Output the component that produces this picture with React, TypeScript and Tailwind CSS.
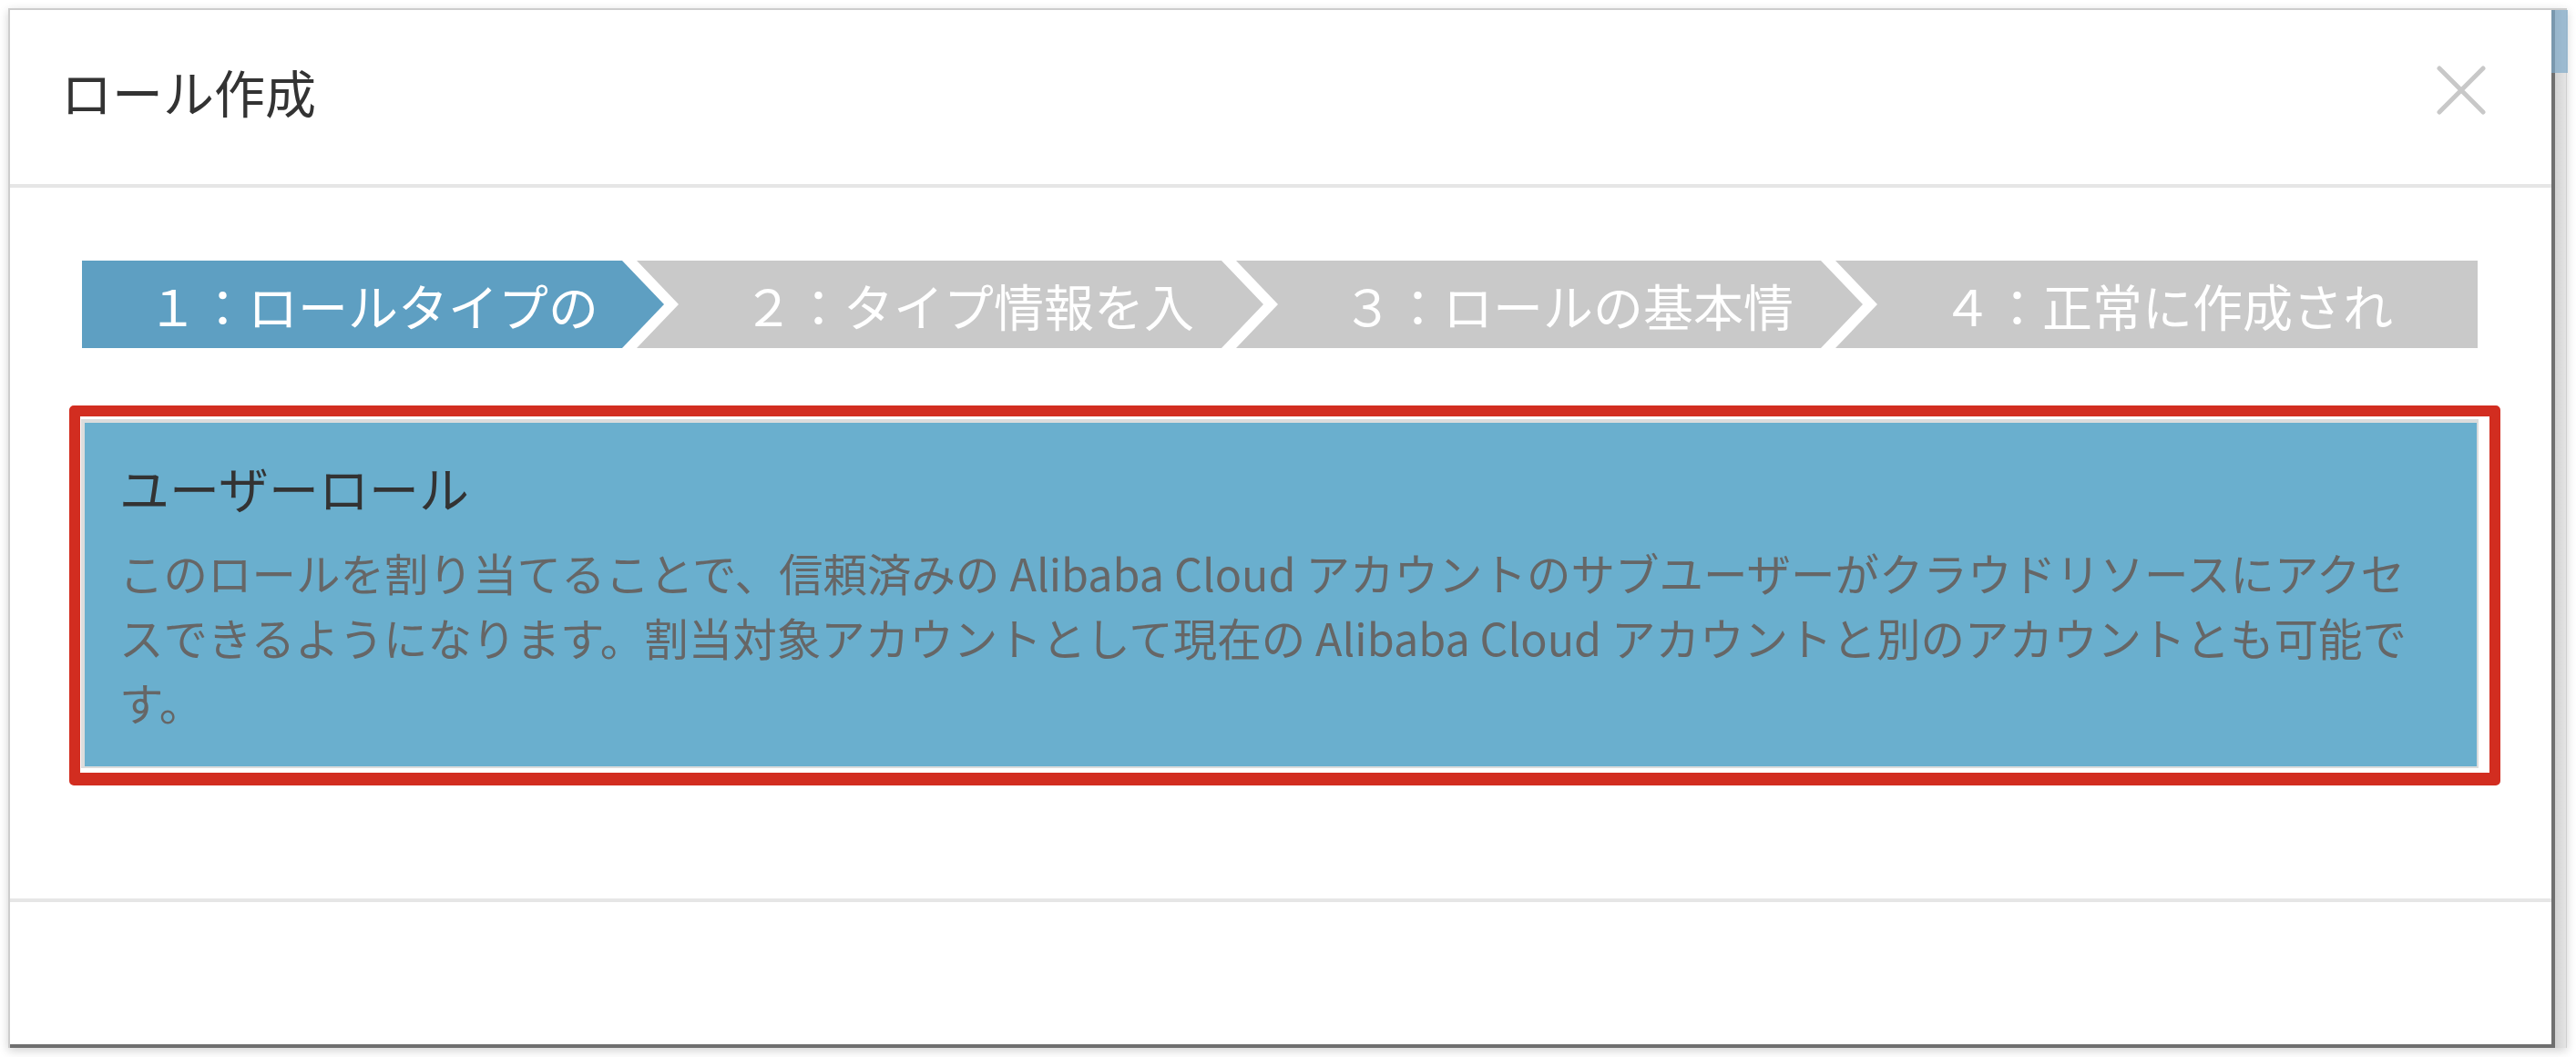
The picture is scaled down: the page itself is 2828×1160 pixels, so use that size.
const jp = "font-['Noto_Sans_CJK_JP','Noto_Sans',sans-serif]";

const Steps = () => {
  return (
    <div className="flex h-[96px] ml-[79px] mr-[81px] mt-[80px]">
      {/* step 1 - active */}
      <div className="w-[639px] shrink-0 h-full bg-[#5e9fc2] flex items-center pl-[72px] overflow-hidden [clip-path:polygon(0_0,calc(100%_-_46px)_0,100%_50%,calc(100%_-_46px)_100%,0_100%)]">
        <span className="text-white text-[55px] leading-none whitespace-nowrap">１：ロールタイプの</span>
      </div>
      <div className="w-[688px] shrink-0 -ml-[30px] h-full bg-[#c9c9c9] flex items-center pl-[117px] overflow-hidden [clip-path:polygon(0_0,calc(100%_-_46px)_0,100%_50%,calc(100%_-_46px)_100%,0_100%,46px_50%)]">
        <span className="text-white text-[55px] leading-none whitespace-nowrap">２：タイプ情報を入</span>
      </div>
      <div className="w-[688px] shrink-0 -ml-[30px] h-full bg-[#c9c9c9] flex items-center pl-[117px] overflow-hidden [clip-path:polygon(0_0,calc(100%_-_46px)_0,100%_50%,calc(100%_-_46px)_100%,0_100%,46px_50%)]">
        <span className="text-white text-[55px] leading-none whitespace-nowrap">３：ロールの基本情</span>
      </div>
      <div className="w-[705px] shrink-0 -ml-[30px] h-full bg-[#c9c9c9] flex items-center pl-[117px] overflow-hidden [clip-path:polygon(0_0,100%_0,100%_100%,0_100%,46px_50%)]">
        <span className="text-white text-[55px] leading-none whitespace-nowrap">４：正常に作成され</span>
      </div>
    </div>
  );
};

const App = () => {
  return (
    <div className={`w-[2828px] h-[1160px] bg-white ${jp}`}>
      <div className="ml-[9px] pt-[9px] w-[2809px]">
        <div className="flex h-[1141px] border-t-2 border-l-2 border-[#cdcdcd] shadow-[0_3px_10px_rgba(0,0,0,0.18)]">
          {/* dialog */}
          <div className="flex-1 flex flex-col bg-white border-r-4 border-b-4 border-[#6f6f6f]">
            {/* header */}
            <div className="h-[191px] shrink-0 flex justify-between pl-[56px] pr-[72px]">
              <h1 className="mt-[48px] text-[56px] leading-[82px] text-[#333333] font-normal">ロール作成</h1>
              <button className="mt-[61px] w-[54px] h-[54px] text-[#c8c8c8]">
                <svg viewBox="0 0 54 54" className="w-full h-full" fill="none" stroke="currentColor" strokeWidth={5} strokeLinecap="round">
                  <path d="M3 3 L51 51 M51 3 L3 51" />
                </svg>
              </button>
            </div>
            <div className="h-[4px] bg-[#e6e6e6] shrink-0" />

            {/* body */}
            <div className="h-[780px] shrink-0">
              <Steps />

              {/* selected role card */}
              <div className="mt-[63px] ml-[65px] mr-[56px] border-[12px] border-b-[14px] border-[#d22d20] rounded-[5px] pl-[1px] pt-[3px] pr-[12px] pb-[5px]">
                <div className="border-l-4 border-t-4 border-r-2 border-b-2 border-[#dcdcdc] bg-[#6aafce] pl-[38px] pr-[20px] pt-[29px] pb-[35px]">
                  <h2 className="text-[55px] leading-[82px] text-[#333333] font-normal">ユーザーロール</h2>
                  <div className="mt-[18px] text-[48.5px] leading-[71px] text-[#666666]">
                    <p className="whitespace-nowrap">このロールを割り当てることで、信頼済みの Alibaba Cloud アカウントのサブユーザーがクラウドリソースにアクセ</p>
                    <p className="whitespace-nowrap">スできるようになります。割当対象アカウントとして現在の Alibaba Cloud アカウントと別のアカウントとも可能で</p>
                    <p className="whitespace-nowrap">す。</p>
                  </div>
                </div>
              </div>
            </div>

            {/* footer */}
            <div className="h-[4px] bg-[#e6e6e6] shrink-0" />
            <div className="flex-1" />
          </div>

          {/* scrollbar */}
          <div className="relative w-[13px] bg-gradient-to-r from-[#d2d2d2] to-[#e4e4e4] border-r border-[#d0d0d0]">
            <div className="absolute top-0 -left-[4px] w-[18px] h-[69px] bg-[#7fa9c9]/70" />
          </div>
        </div>
      </div>
    </div>
  );
};

export default App;
